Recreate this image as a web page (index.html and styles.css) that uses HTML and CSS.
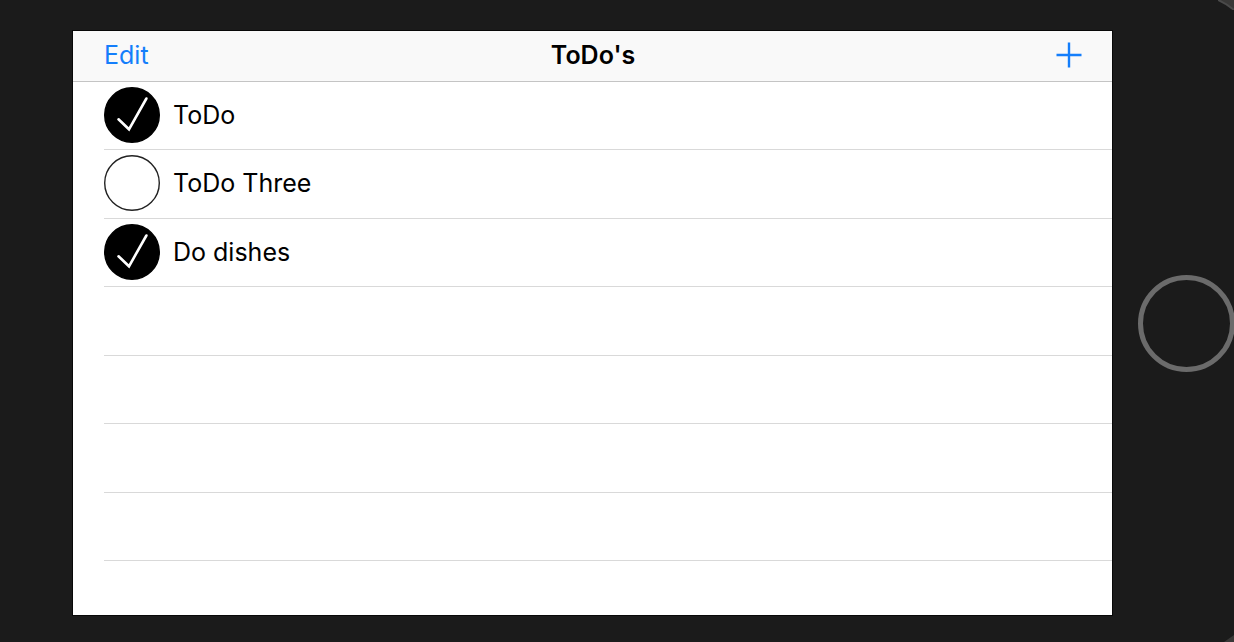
FILE: index.html
```
<!DOCTYPE html>
<html lang="en">
<head>
<meta charset="utf-8">
<meta name="viewport" content="width=device-width, initial-scale=1">
<title>ToDo's</title>
<link rel="stylesheet" href="styles.css">
</head>
<body>
<div class="device">
  <main class="screen">
    <header class="navbar">
      <button class="nav-button" type="button">Edit</button>
      <h1 class="title">ToDo's</h1>
      <button class="nav-button add" type="button" aria-label="Add">
        <svg class="plus" viewBox="0 0 26 26" aria-hidden="true"><path d="M13 .5v25M.5 13h25"/></svg>
      </button>
    </header>
    <ul class="list">
      <li class="row"><label class="item"><input class="check" type="checkbox" checked><svg class="mark" viewBox="0 0 56 56" aria-hidden="true"><circle cx="28" cy="28" r="27.3"/><path d="M14.5 32.3 25 42.3 42.4 11.5"/></svg><span>ToDo</span></label></li>
      <li class="row"><label class="item"><input class="check" type="checkbox"><svg class="mark" viewBox="0 0 56 56" aria-hidden="true"><circle cx="28" cy="28" r="27.3"/><path d="M14.5 32.3 25 42.3 42.4 11.5"/></svg><span>ToDo Three</span></label></li>
      <li class="row"><label class="item"><input class="check" type="checkbox" checked><svg class="mark" viewBox="0 0 56 56" aria-hidden="true"><circle cx="28" cy="28" r="27.3"/><path d="M14.5 32.3 25 42.3 42.4 11.5"/></svg><span>Do dishes</span></label></li>
      <li class="row"></li>
      <li class="row"></li>
      <li class="row"></li>
      <li class="row"></li>
    </ul>
  </main>
  <div class="bezel">
    <button class="home" type="button" aria-label="Home"></button>
  </div>
  <svg class="corner corner-top" viewBox="0 0 16 10" aria-hidden="true"><path class="corner-fill" d="M0 0Q9 4 16 10V0Z"/><path class="corner-edge" d="M0 0Q9 4 16 10"/></svg>
  <svg class="corner corner-bottom" viewBox="0 0 10 8" aria-hidden="true"><path class="corner-fill" d="M0 8 10 1V8Z"/></svg>
</div>
</body>
</html>
```
FILE: styles.css
```
* {
  box-sizing: border-box;
}

body {
  margin: 0;
  background: #1b1b1b;
  color: #000;
  font-family: Inter, "Liberation Sans", sans-serif;
  font-size: 25px;
  line-height: 32px;
}

.device {
  position: relative;
  display: flex;
  min-height: 100vh;
  padding: 31px 0 27px 73px;
  overflow: hidden;
}

.screen {
  flex: 1;
  display: flex;
  flex-direction: column;
  background: #fff;
  box-shadow: 0 0 0 1px #080808;
}

.navbar {
  display: grid;
  grid-template-columns: 1fr auto 1fr;
  align-items: center;
  height: 51px;
  padding: 0 30px 2px 31px;
  background: #f9f9f9;
  border-bottom: 1px solid #c4c4c4;
}

.nav-button {
  justify-self: start;
  padding: 0;
  border: 0;
  background: none;
  color: #147efb;
  font: inherit;
}

.add {
  display: flex;
  justify-self: end;
}

.plus {
  width: 26px;
  height: 26px;
  fill: none;
  stroke: #147efb;
  stroke-width: 2.4;
}

.title {
  margin: 0;
  font-size: 25px;
  font-weight: 600;
}

.list {
  flex: 1;
  display: grid;
  grid-auto-rows: 1fr;
  margin: 0;
  padding: 0 0 54px 31px;
  list-style: none;
}

.row {
  display: flex;
  align-items: center;
  min-height: 60px;
  padding-bottom: 2px;
  border-bottom: 1px solid #d9d9d9;
}

.item {
  display: flex;
  align-items: center;
  gap: 13px;
}

.check {
  position: absolute;
  opacity: 0;
}

.mark {
  width: 56px;
  height: 56px;
  fill: none;
}

.mark circle {
  stroke: #222;
  stroke-width: 1.4;
}

.mark path {
  stroke: none;
}

.check:checked + .mark circle {
  fill: #000;
  stroke: #000;
}

.check:checked + .mark path {
  stroke: #fff;
  stroke-width: 2.6;
  stroke-linecap: round;
}

.bezel {
  display: flex;
  align-items: center;
  flex: 0 0 122px;
  min-width: 0;
  padding-left: 26px;
}

.home {
  flex: none;
  width: 97px;
  height: 97px;
  padding: 0;
  border: 5px solid #6b6b6b;
  border-radius: 50%;
  background: none;
}

.corner {
  position: absolute;
  right: 0;
}

.corner-top {
  top: 0;
  width: 16px;
  height: 10px;
}

.corner-bottom {
  bottom: 0;
  width: 10px;
  height: 8px;
}

.corner-fill {
  fill: #393837;
}

.corner-edge {
  fill: none;
  stroke: #4a4a4a;
  stroke-width: 2;
}
```
